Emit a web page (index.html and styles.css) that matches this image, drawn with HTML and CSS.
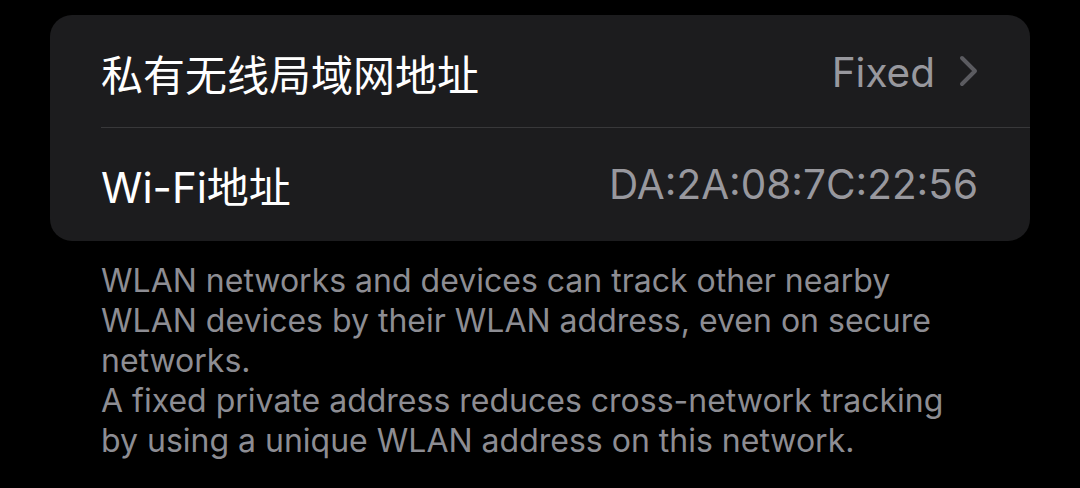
FILE: index.html
```html
<!DOCTYPE html>
<html lang="zh-CN">
  <head>
    <meta charset="UTF-8" />
    <meta name="viewport" content="width=device-width, initial-scale=1.0" />
    <title>Wi-Fi 地址</title>
    <link rel="stylesheet" href="styles.css">
  </head>
  <body>
    <div class="settings">
      <ul class="group">
        <li class="row">
          <span class="row-title">私有无线局域网地址</span>
          <span class="row-value">Fixed</span>
          <svg class="chevron" width="19" height="32" viewBox="0 0 19 32">
            <path d="M3 3 L16 16 L3 29" fill="none" stroke="#5b5b60" stroke-width="4" stroke-linecap="round" stroke-linejoin="round" />
          </svg>
        </li>
        <li class="row">
          <span class="row-title">Wi-Fi地址</span>
          <span class="row-value">DA:2A:08:7C:22:56</span>
        </li>
      </ul>
      <div class="group-footer">
        <p>WLAN networks and devices can track other nearby WLAN devices by their WLAN address, even on secure networks.</p>
        <p>A fixed private address reduces cross-network tracking by using a unique WLAN address on this network.</p>
      </div>
    </div>
  </body>
</html>
```

FILE: styles.css
```css
body {
  margin: 0;
  padding: 0;
  background-color: #000;
  font-family: Inter, "Noto Sans CJK SC", sans-serif;
  -webkit-font-smoothing: antialiased;
}
.settings {
  padding: 15px 50px 0 50px;
}
.group {
  list-style-type: none;
  margin: 0;
  padding: 0;
  background-color: #1c1c1e;
  border-radius: 22px;
  overflow: hidden;
}
.row {
  display: flex;
  align-items: center;
  height: 109px;
  padding-top: 3px;
  margin-left: 51px;
  padding-right: 52px;
  border-bottom: 1px solid #38383a;
}
.row:last-child {
  height: 113px;
  padding-top: 0;
  border-bottom: none;
}
.row-title {
  flex: 1;
  color: #fff;
  font-size: 42px;
}
.row-value {
  color: #98989e;
  font-size: 40.5px;
}
.chevron {
  margin-left: 24px;
  margin-top: -4px;
}
.group-footer {
  padding: 20px 69px 0 51px;
  color: #8d8d93;
  font-size: 32px;
  line-height: 40px;
}
.group-footer p {
  margin: 0;
}
```
